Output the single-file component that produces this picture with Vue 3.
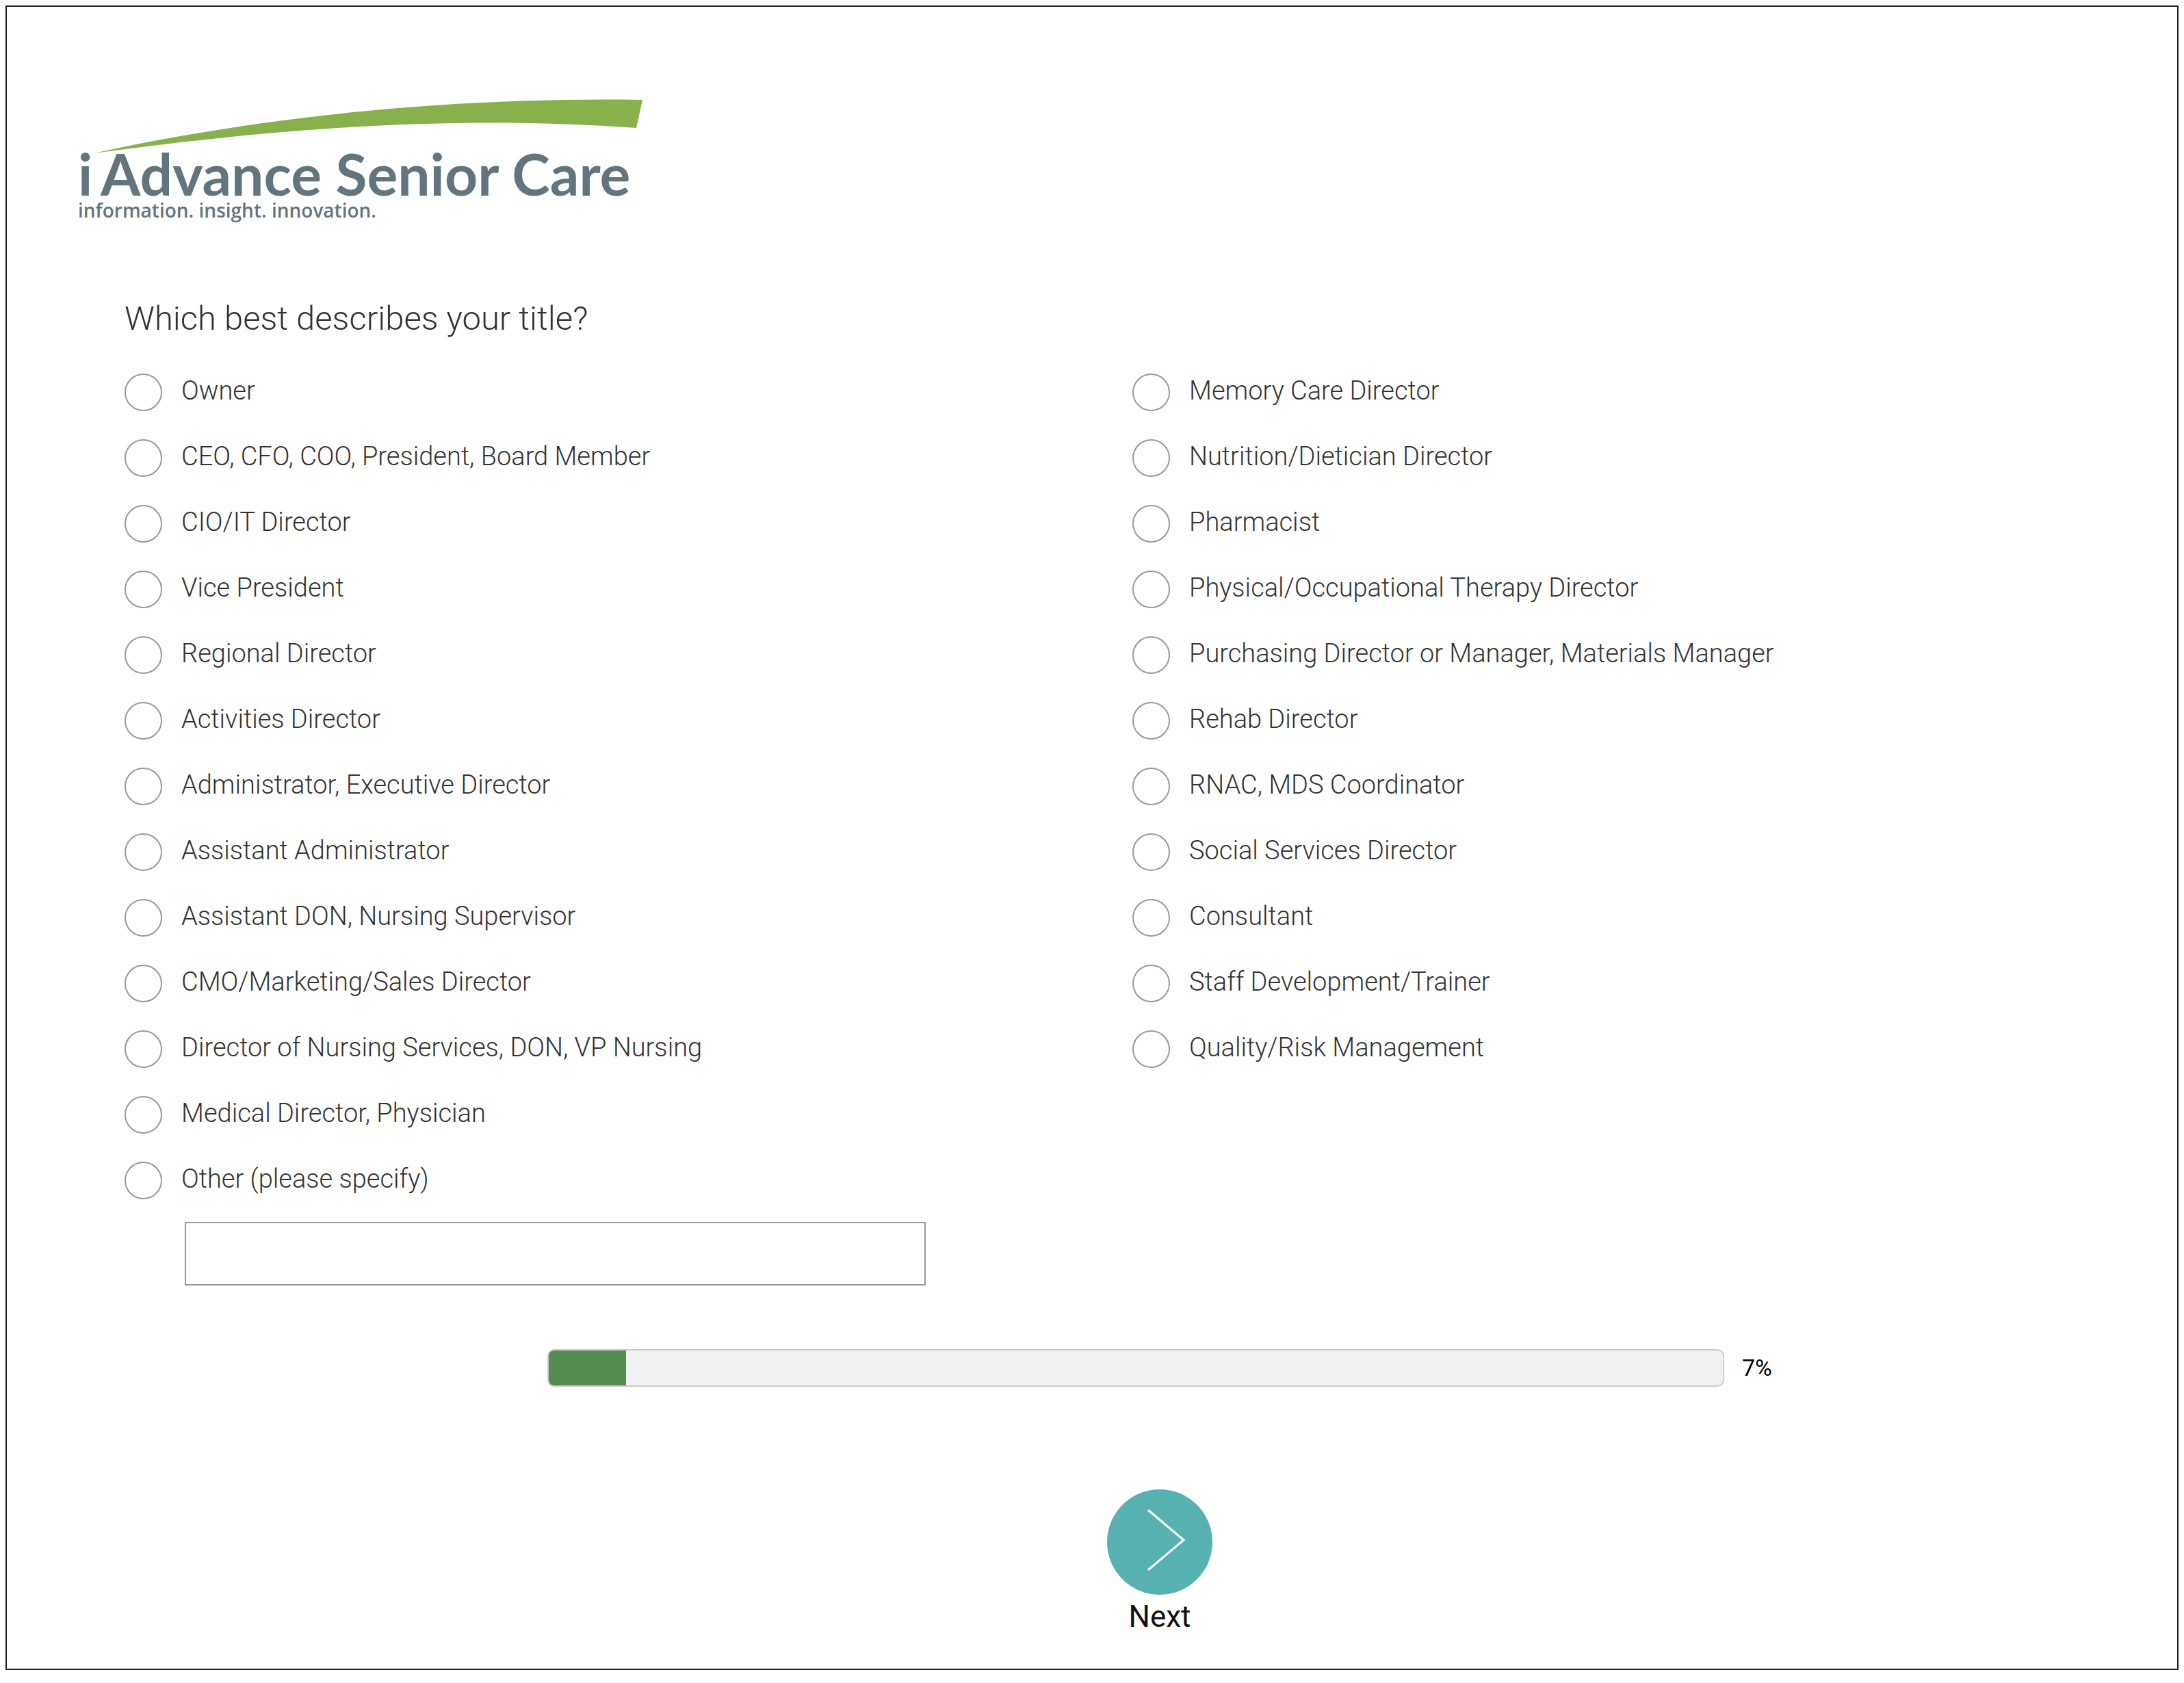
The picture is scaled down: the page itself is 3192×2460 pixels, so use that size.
<template>
  <main class="survey">
    <header class="survey-header">
      <svg class="logo" viewBox="0 0 830 190" role="img" aria-label="i Advance Senior Care">
        <path
          class="logo-swoosh"
          d="M23 84 C286 26 566 2 825 6 L816 47 C566 29 316 44 23 84 Z"
        />
        <text class="logo-name" x="0" y="146">i</text>
        <text class="logo-name" x="33" y="146">Advance Senior Care</text>
        <text class="logo-tagline" x="0" y="178">information. insight. innovation.</text>
      </svg>
    </header>

    <form class="survey-form" @submit.prevent="handleNext">
      <fieldset class="question">
        <legend class="question-title">Which best describes your title?</legend>

        <div class="columns">
          <div v-for="(column, index) in columns" :key="index" class="column">
            <label v-for="option in column" :key="option" class="option">
              <input v-model="answer" type="radio" name="title" :value="option" class="option-radio" />
              <span class="option-text">{{ option }}</span>
            </label>
            <input
              v-if="index === 0"
              v-model="otherTitle"
              type="text"
              class="other-input"
              aria-label="Other (please specify)"
              @focus="answer = OTHER"
            />
          </div>
        </div>
      </fieldset>

      <div class="survey-footer">
        <div class="progress">
          <div class="progress-bar" role="progressbar" aria-label="Progress" :aria-valuenow="progress">
            <div class="progress-fill" :style="{ width: progress + '%' }"></div>
          </div>
          <span class="progress-label">{{ Math.round(progress) }}%</span>
        </div>

        <button type="submit" class="btn-next">
          <svg class="btn-icon" viewBox="0 0 154 154" aria-hidden="true">
            <circle cx="77" cy="77" r="77" />
            <polyline points="61,31 112,74 61,117" />
          </svg>
          <span>Next</span>
        </button>
      </div>
    </form>
  </main>
</template>

<script setup>
import { ref } from 'vue'

const OTHER = 'Other (please specify)'

const columns = [
  [
    'Owner',
    'CEO, CFO, COO, President, Board Member',
    'CIO/IT Director',
    'Vice President',
    'Regional Director',
    'Activities Director',
    'Administrator, Executive Director',
    'Assistant Administrator',
    'Assistant DON, Nursing Supervisor',
    'CMO/Marketing/Sales Director',
    'Director of Nursing Services, DON, VP Nursing',
    'Medical Director, Physician',
    OTHER
  ],
  [
    'Memory Care Director',
    'Nutrition/Dietician Director',
    'Pharmacist',
    'Physical/Occupational Therapy Director',
    'Purchasing Director or Manager, Materials Manager',
    'Rehab Director',
    'RNAC, MDS Coordinator',
    'Social Services Director',
    'Consultant',
    'Staff Development/Trainer',
    'Quality/Risk Management'
  ]
]

const emit = defineEmits(['next'])

const answer = ref('')
const otherTitle = ref('')
const progress = ref(6.6)

const handleNext = () => {
  emit('next', answer.value === OTHER ? otherTitle.value : answer.value)
}
</script>

<style>
body {
  background: #fff;
}
</style>

<style scoped>
.survey {
  margin: 8px;
  padding: 130px 54px 44px 104px;
  border: 2px solid #222;
  color: #333;
  font-family: Roboto, "Liberation Sans", sans-serif;
}

.logo {
  display: block;
  width: 830px;
  max-width: 100%;
}

.logo-swoosh {
  fill: #88b04b;
}

.logo-name,
.logo-tagline {
  fill: #62757f;
}

.logo-name {
  font-family: Lato, "Open Sans", sans-serif;
  font-size: 84px;
  font-weight: 700;
}

.logo-tagline {
  font-family: "Open Sans", "Noto Sans", sans-serif;
  font-size: 28px;
  font-weight: 600;
}

.survey-form {
  margin-top: 104px;
  padding-left: 68px;
}

.question {
  min-width: 0;
  margin: 0;
  padding: 0;
  border: none;
}

.question-title {
  margin-bottom: 48px;
  padding: 0;
  font-size: 49px;
  font-weight: 300;
  line-height: 64px;
}

.columns {
  display: grid;
  grid-template-columns: 1fr 1fr;
}

.column {
  display: flex;
  flex-direction: column;
  align-items: flex-start;
}

.option {
  display: flex;
  align-items: center;
  gap: 28px;
  margin-bottom: 41px;
  cursor: pointer;
}

.option-radio {
  appearance: none;
  flex: none;
  width: 55px;
  height: 55px;
  margin: 0;
  border: 2px solid #999;
  border-radius: 50%;
  background: #fff;
}

.option-radio:checked {
  background: #548b4f;
  box-shadow: inset 0 0 0 10px #fff;
}

.option-text {
  padding-bottom: 6px;
  font-size: 38px;
  font-weight: 300;
  line-height: 48px;
}

.other-input {
  box-sizing: border-box;
  width: 1083px;
  max-width: 100%;
  height: 93px;
  margin: -8px 0 0 88px;
  padding: 0 20px;
  border: 2px solid #999;
  color: inherit;
  font: inherit;
  font-size: 38px;
}

.survey-footer {
  display: flex;
  flex-direction: column;
  align-items: center;
  gap: 150px;
  margin: 93px -54px 0 26px;
}

.progress {
  display: flex;
  align-items: center;
  gap: 26px;
  width: 100%;
  max-width: 1790px;
}

.progress-bar {
  flex: 1;
  box-sizing: border-box;
  height: 55px;
  overflow: hidden;
  border: 2px solid #ccc;
  border-radius: 10px;
  background: #f1f1f1;
}

.progress-fill {
  height: 100%;
  background: #548b4f;
}

.progress-label {
  padding-bottom: 2px;
  color: #000;
  font-size: 34px;
}

.btn-next {
  display: flex;
  flex-direction: column;
  align-items: center;
  padding: 0;
  border: none;
  background: none;
  color: #111;
  font-family: inherit;
  font-size: 44px;
  line-height: 64px;
  cursor: pointer;
}

.btn-icon {
  width: 154px;
  height: 154px;
}

.btn-icon circle {
  fill: #58b1b1;
}

.btn-icon polyline {
  fill: none;
  stroke: #fff;
  stroke-width: 3;
  stroke-linecap: round;
}
</style>
